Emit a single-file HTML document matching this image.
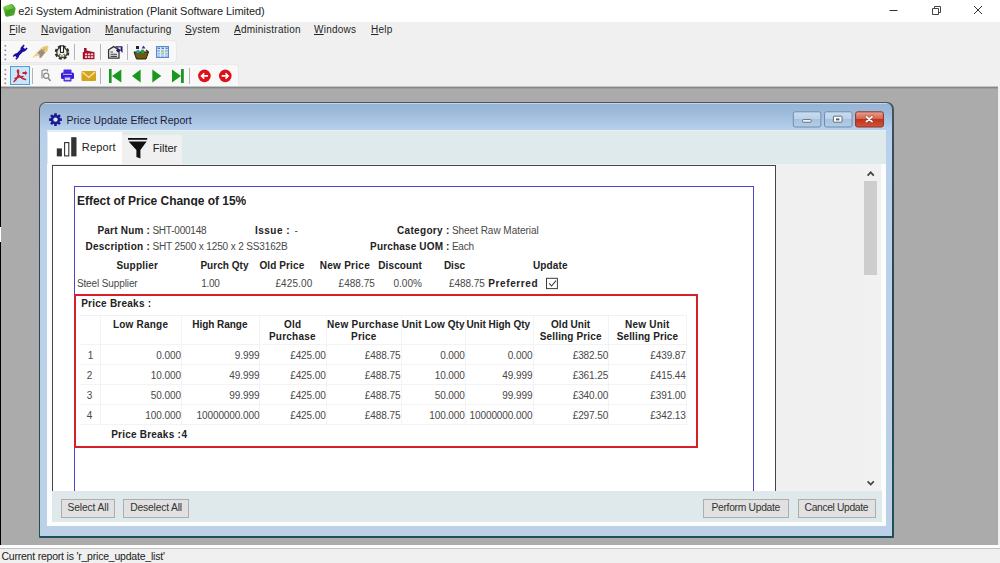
<!DOCTYPE html>
<html><head><meta charset="utf-8">
<style>
*{margin:0;padding:0;box-sizing:border-box}
html,body{width:1000px;height:563px;overflow:hidden;background:#f0f0f0;font-family:"Liberation Sans",sans-serif;}
.a{position:absolute}
.t{position:absolute;white-space:nowrap;line-height:1}
#titlebar{left:0;top:0;width:1000px;height:22px;background:#fff}
#menubar{left:0;top:22px;width:1000px;height:17px;background:#f0f0f0}
#menubar .t{font-size:10px;color:#262626;top:2.900px;letter-spacing:0.25px}
#menubar u{text-decoration:underline}
#mdi{left:0;top:87px;width:998.400px;height:457.600px;background:#ababab}
#status{left:0;top:545px;width:1000px;height:18px;background:#f0f0f0}
.r{font-size:10px}
.n{color:#484848}
.b{font-weight:bold;color:#222}
.btn{position:absolute;border:1px solid #adadad;background:#e1e1e1}
.bt{font-size:10.3px;color:#333;margin-top:0.4px}
</style></head><body>

<!-- title bar -->
<div class="a" id="titlebar">
  <svg class="a" style="left:2px;top:3px" width="15" height="15" viewBox="2 3 15 15"><defs><linearGradient id="gi" x1="0" y1="0" x2="1" y2="1"><stop offset="0" stop-color="#8ad84a"/><stop offset=".5" stop-color="#3c9a22"/><stop offset="1" stop-color="#5cb030"/></linearGradient></defs><path d="M3.200 8.200 Q3 6.800 4.600 6.200 L10.600 4.200 Q12 3.800 13 4.800 L15.200 7.600 Q15.800 8.600 15.400 9.600 L14.400 14.200 Q14 15.400 12.800 15.600 L7.400 16.800 Q6 17 5.400 15.800 Z" fill="url(#gi)"/><path d="M4 7 L10.800 4.600 L14.600 8 L7.600 10 Z" fill="#8fdc52" opacity=".55"/></svg>
  <div class="t" style="left:18.300px;top:5.800px;font-size:11px;color:#222;letter-spacing:-0.06px">e2i System Administration (Planit Software Limited)</div>
  <svg class="a" style="left:880px;top:0" width="120" height="22" viewBox="0 0 120 22"><path d="M9.500 10.500 H17.500" stroke="#333" stroke-width="1" fill="none"/><path d="M52.500 8.500 H58.500 V14.500 H52.500 Z M54.500 8.500 V6.500 H60.500 V12.500 H58.500" stroke="#444" stroke-width="1" fill="none"/><path d="M94 6 L102 14 M102 6 L94 14" stroke="#333" stroke-width="1" fill="none"/></svg>
</div>

<!-- menu bar -->
<div class="a" id="menubar">
  <div class="t" style="left:9.200px"><u>F</u>ile</div>
  <div class="t" style="left:41px"><u>N</u>avigation</div>
  <div class="t" style="left:105px"><u>M</u>anufacturing</div>
  <div class="t" style="left:185px"><u>S</u>ystem</div>
  <div class="t" style="left:234px"><u>A</u>dministration</div>
  <div class="t" style="left:314px"><u>W</u>indows</div>
  <div class="t" style="left:371px"><u>H</u>elp</div>
</div>

<!-- toolbars -->
<div class="a" id="tb1" style="left:0;top:41px;width:176px;height:21px;background:#f8f8f8;border-radius:0 3px 3px 0;box-shadow:0 0 0 1px #e9e9e9"></div>
<div class="a" id="tb2" style="left:0;top:65px;width:238px;height:21px;background:#f8f8f8;border-radius:0 3px 0 0;box-shadow:0 0 0 1px #e9e9e9"></div>
<svg class="a" id="tbicons" style="left:0;top:40px" width="240" height="47" viewBox="0 40 240 47">
<g fill="#8a8a8a"><rect x="4.500" y="45" width="1.600" height="1.600"/><rect x="4.500" y="49.500" width="1.600" height="1.600"/><rect x="4.500" y="54" width="1.600" height="1.600"/><rect x="4.500" y="58.500" width="1.600" height="1.600"/>
<rect x="4.500" y="69" width="1.600" height="1.600"/><rect x="4.500" y="73.500" width="1.600" height="1.600"/><rect x="4.500" y="78" width="1.600" height="1.600"/><rect x="4.500" y="82.500" width="1.600" height="1.600"/></g>
<g stroke="#b4b4b4" stroke-width="1"><path d="M74.500 44 V60 M100.500 44 V60 M127.500 44 V60 M32.500 68 V84 M100.500 68 V84 M189.500 68 V84"/></g>
<!-- wrench -->
<g transform="translate(20 52.400) scale(.86) rotate(-45) translate(-20.2 -52.400)"><rect x="13.500" y="50.500" width="13.400" height="3.800" fill="#1c0ca0"/><path d="M26 49 h3.600 l0 1.800 h-2.600 v3 h2.600 v1.800 h-3.600 a3.300 3.300 0 0 1 0 -6.600 z" fill="#1c0ca0"/><path d="M14.400 49.400 h-3.200 v1.700 h2.300 v2.600 h-2.300 v1.700 h3.200 a3 3 0 0 0 0 -6 z" fill="#1c0ca0"/></g>
<!-- rocket -->
<g transform="translate(40.500 52.300) scale(1.1) translate(-40.500 -52.300)"><path d="M32.800 57.200 L37.500 52 L42 47.500 L46.500 46.200 L47.800 47.200 L47 51 L42.500 56 L40 58 L39 55.500 L36 56.200 Z" fill="#ecd084"/><path d="M37.600 52.600 L41.800 49.200 L44.600 52.400 L41.200 57 L39.600 57.400 L39.800 54.600 Z" fill="#9a8c8c"/><path d="M42.500 48.500 L46.200 46.800 L47 47.800 L46 51.200 Z" fill="#e6c37c"/><circle cx="43.800" cy="50" r="1" fill="#c9a468"/></g>
<!-- gear clock -->
<g transform="translate(62 52.400) scale(1.08) translate(-62 -52.400)"><circle cx="62" cy="52.400" r="5.700" fill="none" stroke="#2e2e2e" stroke-width="2.100" stroke-dasharray="2.700 1.780"/><circle cx="62" cy="52.400" r="4.800" fill="#f1efe2" stroke="#3a3a30" stroke-width="1.100"/><rect x="60.600" y="46.400" width="2.800" height="6" fill="#fff" stroke="#222" stroke-width="1"/><path d="M58.500 56 L60.500 54 M63.500 54 L65.500 56 M62 55 V57.500" stroke="#55553a" stroke-width="1.100"/></g>
<!-- factory -->
<g fill="#a4142a"><path d="M82.800 52 H84 V48 H86.600 V50.400 L94.500 52.200 V59.200 H82.800 Z"/></g>
<g fill="#f6dada"><rect x="85" y="53.500" width="2.200" height="1.700"/><rect x="88" y="53.500" width="2.200" height="1.700"/><rect x="91" y="53.500" width="2.200" height="1.700"/><rect x="85" y="56.200" width="2.200" height="1.700"/><rect x="88" y="56.200" width="2.200" height="1.700"/><rect x="91" y="56.200" width="2.200" height="1.700"/></g>
<!-- form icon -->
<g><path d="M108.600 58.200 V49.800 L113.600 46.600 L119 49.800 V58.200 Z" fill="#ededed" stroke="#333" stroke-width="1.300"/><path d="M110.500 52 H113 M110.500 54.300 H117 M110.500 56.400 H117" stroke="#444" stroke-width="1.100"/><path d="M115 46.200 H122.500 V53 L120.400 50.600 L118 52.600 L116 50.400 L117.600 48.600 Z" fill="#1c1c60"/><path d="M117 47.400 L120.800 47.200 L120.600 50" fill="#dfe4fa"/></g>
<!-- box with shapes -->
<g><path d="M134 52 H148.500 L146 59 H136.500 Z" fill="#6a5a14" stroke="#2a2408" stroke-width="1"/><rect x="136" y="46" width="3" height="3" fill="#222"/><path d="M141.500 48.500 L143.500 45.500 L145.500 48.500 Z" fill="#2a3a9a"/><circle cx="138" cy="51.500" r="1.800" fill="#2aa0c8"/><circle cx="142.500" cy="51.500" r="2" fill="#2a9a3a"/><path d="M146 50 L148.500 52" stroke="#222" stroke-width="1.200"/></g>
<!-- grid -->
<g><rect x="156.500" y="46.500" width="12" height="11" fill="#9cc0ea" stroke="#5a8ad0" stroke-width="1"/><path d="M160.500 47 V57 M164.500 47 V57" stroke="#dfeaf8" stroke-width="1"/><path d="M157 49.500 H168 M157 52.500 H168 M157 55 H168" stroke="#dfeaf8" stroke-width=".8"/><path d="M158 48.500 H160 M162 48.500 H164 M166 48.500 H167.500" stroke="#3a6ab8" stroke-width=".8"/><rect x="161.500" y="50.500" width="2.500" height="4" fill="#b8d08a" opacity=".8"/></g>
<!-- pdf button -->
<rect x="10.500" y="66.500" width="19" height="18" fill="#cde6f7" stroke="#4a9fe0" stroke-width="1"/>
<g fill="none" stroke="#c0283a" stroke-width="1.500" stroke-linecap="round"><path d="M14 81.500 C17 79 19 75 18.500 70.500 C18.200 69.600 17.200 70 17.500 71.500 C18.500 76 21.500 78.500 25.500 79.500"/><path d="M15 78.500 C18 77 21 76.500 23 76.500"/></g>
<path d="M22.500 72 H25 V70.800 L27.500 73 L25 75.200 V74 H22.500 Z" fill="#c0283a"/>
<!-- search -->
<g fill="none" stroke="#8c8c8c" stroke-width="1.200"><path d="M42 78.500 V71 L43.500 69.800 H47.500 V71.500"/><circle cx="46.200" cy="75.800" r="2.600"/><path d="M48 77.800 L50.500 81" stroke-width="1.600"/></g>
<!-- printer -->
<g><rect x="63.500" y="69.500" width="8" height="3.500" rx=".8" fill="#4a2ae0"/><rect x="61" y="72.500" width="13" height="6.500" rx="1.500" fill="#3a1ad6"/><rect x="63.500" y="76.500" width="8" height="5" rx=".8" fill="#4a2ae0"/><rect x="64.800" y="77.500" width="5.400" height="2.600" fill="#cfc8f4"/><rect x="63" y="73.800" width="9" height="1.200" fill="#d8d0ff" opacity=".8"/></g>
<!-- mail -->
<g><rect x="81.500" y="71" width="14.500" height="10" rx="1" fill="#d6a41c"/><path d="M82.500 72 L88.800 77.500 L95 72" fill="none" stroke="#f6e6b0" stroke-width="1.300"/></g>
<!-- nav green -->
<g fill="#18981e"><rect x="109" y="69" width="2.600" height="14"/><path d="M121.300 69.500 V82.500 L112 76 Z"/>
<path d="M140.600 69.500 V82.500 L132 76 Z"/>
<path d="M152.300 69.500 V82.500 L161.300 76 Z"/>
<path d="M172 69.500 V82.500 L181 76 Z"/><rect x="181" y="69" width="2.800" height="14"/></g>
<!-- red circles -->
<g><circle cx="204.400" cy="75.900" r="6.300" fill="#e01018"/><path d="M208 75.900 H202 M204.200 73.200 L201.500 75.900 L204.200 78.600" stroke="#fff" stroke-width="1.600" fill="none"/>
<circle cx="225.300" cy="75.900" r="6.300" fill="#e01018"/><path d="M221.700 75.900 H227.700 M225.500 73.200 L228.200 75.900 L225.500 78.600" stroke="#fff" stroke-width="1.600" fill="none"/></g>

</svg>
<!-- MDI -->
<div class="a" id="mdi"></div>
<div class="a" style="left:0;top:86px;width:998.400px;height:1px;background:#c4c4c4"></div><div class="a" style="left:0;top:87px;width:998.400px;height:1px;background:#868686"></div><div class="a" style="left:0;top:88px;width:998.400px;height:1px;background:#9c9c9c"></div>
<div class="a" style="left:0;top:0;width:1.200px;height:548px;background:#000"></div><div class="a" style="left:0;top:227px;width:1.200px;height:15px;background:#fff"></div>

<!-- child window -->
<div class="a" id="win" style="left:39px;top:102px;width:855px;height:436px;border-radius:7px 7px 1px 1px;background:linear-gradient(#4a5560,#3a4a58 40px,#2a4652 200px,#1d5058)"></div>
<div class="a" id="winin" style="left:40px;top:103px;width:852px;height:433px;border-radius:6px 6px 0 0;background:linear-gradient(#c6d6e8,#c6d6e8 1px,#98b5d5 1.500px,#9bb8d8 7px,#a4c0de 14px,#aec9e6 21px,#b6d0ec 26px,#bbd1e9 60px,#bcd1e8)"></div>
<div class="a" id="client" style="left:47px;top:130px;width:839px;height:396px;background:#fbfdfd"></div>
<div class="a" id="tabstrip" style="left:47px;top:130px;width:839px;height:34px;background:#deeaec;border-top:1px solid #e6f0f2"></div>

<!-- window title -->
<svg class="a" style="left:48px;top:112px" width="16" height="16" viewBox="48 112 16 16"><g fill="#1c1c90"><circle cx="55.500" cy="119.600" r="4.700"/><g stroke="#1c1c90" stroke-width="2.600"><path d="M55.500 113.200 V126 M49.100 119.600 H61.900 M51 115.100 L60 124.100 M60 115.100 L51 124.100"/></g></g><circle cx="55.500" cy="119.600" r="2.200" fill="#d8e6f6"/></svg>
<div class="t" style="left:66.500px;top:114.700px;font-size:10.500px;color:#1c1c3c;letter-spacing:0.02px">Price Update Effect Report</div>

<!-- window buttons -->
<svg class="a" style="left:790px;top:109px" width="98" height="22" viewBox="790 109 98 22">
<defs>
<linearGradient id="gb" x1="0" y1="0" x2="0" y2="1"><stop offset="0" stop-color="#c9dcf0"/><stop offset=".48" stop-color="#bcd2ea"/><stop offset=".5" stop-color="#a6c2e0"/><stop offset="1" stop-color="#b4cde8"/></linearGradient>
<linearGradient id="gr" x1="0" y1="0" x2="0" y2="1"><stop offset="0" stop-color="#e8a090"/><stop offset=".48" stop-color="#d8604a"/><stop offset=".5" stop-color="#c4321a"/><stop offset="1" stop-color="#d2553a"/></linearGradient>
</defs>
<rect x="793.300" y="111.800" width="27.600" height="15.200" rx="2" fill="url(#gb)" stroke="#6f8cae" stroke-width="1"/>
<rect x="824.500" y="111.800" width="27.600" height="15.200" rx="2" fill="url(#gb)" stroke="#6f8cae" stroke-width="1"/>
<rect x="855.600" y="111.800" width="27.800" height="15.200" rx="2" fill="url(#gr)" stroke="#8a3428" stroke-width="1"/>
<rect x="802.600" y="119.600" width="8.600" height="2.600" rx=".8" fill="#fff" stroke="#55606c" stroke-width=".9"/>
<rect x="833.400" y="116.200" width="8.600" height="6" rx=".6" fill="#fff" stroke="#55606c" stroke-width=".9"/>
<rect x="836" y="118.400" width="3.400" height="2" fill="#55606c"/>
<path d="M866.400 116.800 L872 121.600 M872 116.800 L866.400 121.600" stroke="#8a3a30" stroke-width="3" stroke-linecap="round"/>
<path d="M866.400 116.800 L872 121.600 M872 116.800 L866.400 121.600" stroke="#fff" stroke-width="1.900" stroke-linecap="round"/>
</svg>

<!-- tabs -->
<div class="a" style="left:47.500px;top:132px;width:74.500px;height:33px;background:#fff"></div>
<div class="a" style="left:122px;top:134.500px;width:60px;height:30px;background:#f0f0f0"></div>
<svg class="a" style="left:54px;top:134px" width="100" height="28" viewBox="54 134 100 28">
<rect x="56.800" y="148.400" width="5.100" height="8" fill="#333"/>
<rect x="64.600" y="142.600" width="4.200" height="13.300" fill="#fff" stroke="#333" stroke-width="1.100"/>
<rect x="71.200" y="137.200" width="5.300" height="19.200" fill="#333"/>
<rect x="128" y="138" width="19.200" height="1.800" fill="#111"/>
<path d="M128.600 141.500 H146.600 L140.400 150 V158.600 L136.400 157 V150 Z" fill="#111"/>
</svg>
<div class="t" style="left:81.800px;top:141.700px;font-size:11px;color:#222;letter-spacing:0.15px">Report</div>
<div class="t" style="left:152.800px;top:143.100px;font-size:11px;color:#222">Filter</div>

<!-- tab page -->
<div class="a" style="left:52px;top:164px;width:828.500px;height:328px;background:#f0f0f0"></div>
<div class="a" style="left:52px;top:491px;width:830px;height:31px;background:#dfe9ec"></div>
<!-- report viewer -->
<div class="a" id="viewer" style="left:52px;top:165px;width:724px;height:326px;background:#fff;border:1px solid #454545;border-bottom:none"></div>
<div class="a" id="bluebox" style="left:74px;top:186px;width:680px;height:305px;border:1px solid #4a46c4;border-bottom:none"></div>
<!-- scrollbar -->
<div class="a" style="left:862.500px;top:165px;width:17px;height:326px;background:#f1f1f1"></div>
<div class="a" style="left:864px;top:181px;width:13.400px;height:93.500px;background:#cdcdcd"></div>
<svg class="a" style="left:862px;top:165px" width="18" height="326" viewBox="862 165 18 326"><path d="M867.600 175.600 L870.700 172.300 L873.800 175.600" fill="none" stroke="#444" stroke-width="1.700"/><path d="M867.600 481.300 L870.700 484.600 L873.800 481.300" fill="none" stroke="#444" stroke-width="1.700"/></svg>

<!-- report text -->
<div class="t b" style="left:77px;top:195.400px;font-size:12px;height:10.400px;overflow:hidden;letter-spacing:-0.03px">Effect of Price Change of 15%</div>

<!-- grid -->
<div class="a" id="grid" style="left:79px;top:315px;width:608px;height:110px;
background:
linear-gradient(#f0f0f0,#f3f3f3) 0 0/100% 1px no-repeat,
linear-gradient(#f3f3f3,#f3f3f3) 0 29px/100% 1px no-repeat,
linear-gradient(#f3f3f3,#f3f3f3) 0 49px/100% 1px no-repeat,
linear-gradient(#f3f3f3,#f3f3f3) 0 69px/100% 1px no-repeat,
linear-gradient(#f3f3f3,#f3f3f3) 0 89px/100% 1px no-repeat,
linear-gradient(#f3f3f3,#f3f3f3) 0 109px/100% 1px no-repeat,
linear-gradient(#f3f3f3,#f3f3f3) 21px 0/1px 100% no-repeat,
linear-gradient(#f3f3f3,#f3f3f3) 102px 0/1px 100% no-repeat,
linear-gradient(#f3f3f3,#f3f3f3) 180px 0/1px 100% no-repeat,
linear-gradient(#f3f3f3,#f3f3f3) 247px 0/1px 100% no-repeat,
linear-gradient(#f3f3f3,#f3f3f3) 322px 0/1px 100% no-repeat,
linear-gradient(#f3f3f3,#f3f3f3) 386px 0/1px 100% no-repeat,
linear-gradient(#f3f3f3,#f3f3f3) 454px 0/1px 100% no-repeat,
linear-gradient(#f3f3f3,#f3f3f3) 529px 0/1px 100% no-repeat,
linear-gradient(#f3f3f3,#f3f3f3) 607px 0/1px 100% no-repeat"></div>
<div class="t r b" style="left:97.40px;top:225.69px;letter-spacing:0.214px">Part Num :</div>
<div class="t r n" style="left:152.40px;top:225.69px;letter-spacing:-0.221px">SHT-000148</div>
<div class="t r b" style="left:254.90px;top:225.69px;letter-spacing:0.502px">Issue :</div>
<div class="t r n" style="left:294.40px;top:225.69px;letter-spacing:0.000px">-</div>
<div class="t r b" style="left:397.10px;top:225.69px;letter-spacing:0.305px">Category :</div>
<div class="t r n" style="left:451.90px;top:225.69px;letter-spacing:-0.026px">Sheet Raw Material</div>
<div class="t r b" style="left:85.40px;top:241.69px;letter-spacing:0.275px">Description :</div>
<div class="t r n" style="left:152.40px;top:241.69px;letter-spacing:-0.134px">SHT 2500 x 1250 x 2 SS3162B</div>
<div class="t r b" style="left:370.10px;top:241.69px;letter-spacing:0.161px">Purchase UOM :</div>
<div class="t r n" style="left:451.90px;top:241.69px;letter-spacing:-0.199px">Each</div>
<div class="t r b" style="left:116.40px;top:260.69px;letter-spacing:0.211px">Supplier</div>
<div class="t r b" style="left:200.40px;top:260.69px;letter-spacing:0.045px">Purch Qty</div>
<div class="t r b" style="left:259.40px;top:260.69px;letter-spacing:0.116px">Old Price</div>
<div class="t r b" style="left:319.70px;top:260.69px;letter-spacing:0.276px">New Price</div>
<div class="t r b" style="left:378.20px;top:260.69px;letter-spacing:0.140px">Discount</div>
<div class="t r b" style="left:443.90px;top:260.69px;letter-spacing:-0.006px">Disc</div>
<div class="t r b" style="left:532.90px;top:260.69px;letter-spacing:0.132px">Update</div>
<div class="t r n" style="left:76.90px;top:278.99px;letter-spacing:-0.112px">Steel Supplier</div>
<div class="t r n" style="left:201.15px;top:278.99px;letter-spacing:-0.255px">1.00</div>
<div class="t r n" style="left:275.40px;top:278.99px;letter-spacing:0.113px">£425.00</div>
<div class="t r n" style="left:338.60px;top:278.99px;letter-spacing:0.021px">£488.75</div>
<div class="t r n" style="left:393.60px;top:278.99px;letter-spacing:-0.032px">0.00%</div>
<div class="t r n" style="left:449.00px;top:278.99px;letter-spacing:-0.065px">£488.75</div>
<div class="t r b" style="left:488.30px;top:278.99px;letter-spacing:0.603px">Preferred</div>
<div class="t r b" style="left:81.20px;top:298.54px;letter-spacing:0.242px">Price Breaks :</div>
<div class="t r b" style="left:112.90px;top:319.64px;letter-spacing:0.217px">Low Range</div>
<div class="t r b" style="left:192.20px;top:319.64px;letter-spacing:-0.026px">High Range</div>
<div class="t r b" style="left:284.00px;top:319.64px;letter-spacing:0.209px">Old</div>
<div class="t r b" style="left:268.90px;top:331.74px;letter-spacing:0.246px">Purchase</div>
<div class="t r b" style="left:327.00px;top:319.64px;letter-spacing:0.302px">New Purchase</div>
<div class="t r b" style="left:351.00px;top:331.74px;letter-spacing:0.226px">Price</div>
<div class="t r b" style="left:401.80px;top:319.64px;letter-spacing:0.094px">Unit Low Qty</div>
<div class="t r b" style="left:466.40px;top:319.64px;letter-spacing:-0.022px">Unit High Qty</div>
<div class="t r b" style="left:551.00px;top:319.64px;letter-spacing:0.039px">Old Unit</div>
<div class="t r b" style="left:539.80px;top:331.74px;letter-spacing:0.136px">Selling Price</div>
<div class="t r b" style="left:625.00px;top:319.64px;letter-spacing:0.227px">New Unit</div>
<div class="t r b" style="left:616.80px;top:331.74px;letter-spacing:0.105px">Selling Price</div>
<div class="t r b" style="left:111.15px;top:430.14px;letter-spacing:0.224px">Price Breaks :</div>
<div class="t r b" style="left:181.60px;top:430.14px;letter-spacing:0.000px">4</div>
<div class="t r n" style="left:87.70px;top:351.24px;letter-spacing:0.000px">1</div>
<div class="t r n" style="left:86.70px;top:371.04px;letter-spacing:0.000px">2</div>
<div class="t r n" style="left:86.70px;top:390.94px;letter-spacing:0.000px">3</div>
<div class="t r n" style="left:86.70px;top:410.84px;letter-spacing:0.000px">4</div>
<div class="t r n" style="left:156.31px;top:351.24px;letter-spacing:-0.09px">0.000</div>
<div class="t r n" style="left:234.81px;top:351.24px;letter-spacing:-0.09px">9.999</div>
<div class="t r n" style="left:290.16px;top:351.24px;letter-spacing:-0.09px">£425.00</div>
<div class="t r n" style="left:364.86px;top:351.24px;letter-spacing:-0.09px">£488.75</div>
<div class="t r n" style="left:440.21px;top:351.24px;letter-spacing:-0.09px">0.000</div>
<div class="t r n" style="left:507.81px;top:351.24px;letter-spacing:-0.09px">0.000</div>
<div class="t r n" style="left:572.66px;top:351.24px;letter-spacing:-0.09px">£382.50</div>
<div class="t r n" style="left:650.26px;top:351.24px;letter-spacing:-0.09px">£439.87</div>
<div class="t r n" style="left:150.84px;top:371.04px;letter-spacing:-0.09px">10.000</div>
<div class="t r n" style="left:229.34px;top:371.04px;letter-spacing:-0.09px">49.999</div>
<div class="t r n" style="left:290.16px;top:371.04px;letter-spacing:-0.09px">£425.00</div>
<div class="t r n" style="left:364.86px;top:371.04px;letter-spacing:-0.09px">£488.75</div>
<div class="t r n" style="left:434.74px;top:371.04px;letter-spacing:-0.09px">10.000</div>
<div class="t r n" style="left:502.34px;top:371.04px;letter-spacing:-0.09px">49.999</div>
<div class="t r n" style="left:572.66px;top:371.04px;letter-spacing:-0.09px">£361.25</div>
<div class="t r n" style="left:650.26px;top:371.04px;letter-spacing:-0.09px">£415.44</div>
<div class="t r n" style="left:150.84px;top:390.94px;letter-spacing:-0.09px">50.000</div>
<div class="t r n" style="left:229.34px;top:390.94px;letter-spacing:-0.09px">99.999</div>
<div class="t r n" style="left:290.16px;top:390.94px;letter-spacing:-0.09px">£425.00</div>
<div class="t r n" style="left:364.86px;top:390.94px;letter-spacing:-0.09px">£488.75</div>
<div class="t r n" style="left:434.74px;top:390.94px;letter-spacing:-0.09px">50.000</div>
<div class="t r n" style="left:502.34px;top:390.94px;letter-spacing:-0.09px">99.999</div>
<div class="t r n" style="left:572.66px;top:390.94px;letter-spacing:-0.09px">£340.00</div>
<div class="t r n" style="left:650.26px;top:390.94px;letter-spacing:-0.09px">£391.00</div>
<div class="t r n" style="left:145.36px;top:410.84px;letter-spacing:-0.09px">100.000</div>
<div class="t r n" style="left:196.50px;top:410.84px;letter-spacing:-0.09px">10000000.000</div>
<div class="t r n" style="left:290.16px;top:410.84px;letter-spacing:-0.09px">£425.00</div>
<div class="t r n" style="left:364.86px;top:410.84px;letter-spacing:-0.09px">£488.75</div>
<div class="t r n" style="left:429.26px;top:410.84px;letter-spacing:-0.09px">100.000</div>
<div class="t r n" style="left:469.50px;top:410.84px;letter-spacing:-0.09px">10000000.000</div>
<div class="t r n" style="left:572.66px;top:410.84px;letter-spacing:-0.09px">£297.50</div>
<div class="t r n" style="left:650.26px;top:410.84px;letter-spacing:-0.09px">£342.13</div>
<!-- red box -->
<div class="a" id="red" style="left:73.5px;top:294px;width:624.2px;height:154px;border:2.4px solid #d3202a"></div>

<svg class="a" style="left:545px;top:277px" width="15" height="14" viewBox="545 277 15 14"><rect x="546.500" y="278.300" width="10.900" height="10.300" fill="#fff" stroke="#3c3c3c" stroke-width="1"/><path d="M549.200 283.400 L551.600 286 L556 280.600" fill="none" stroke="#3c3c3c" stroke-width="1.100"/></svg>
<!-- bottom buttons -->
<div class="btn" style="left:61.300px;top:498.800px;width:53.500px;height:18.800px"></div>
<div class="btn" style="left:123.300px;top:498.800px;width:66.200px;height:18.800px"></div>
<div class="btn" style="left:703.300px;top:498.800px;width:85.500px;height:18.800px"></div>
<div class="btn" style="left:797.600px;top:498.800px;width:78.400px;height:18.800px"></div>
<div class="t bt" style="left:67.400px;top:503px;letter-spacing:-0.12px">Select All</div>
<div class="t bt" style="left:130.300px;top:503px;letter-spacing:-0.18px">Deselect All</div>
<div class="t bt" style="left:711.500px;top:503px;letter-spacing:-0.3px">Perform Update</div>
<div class="t bt" style="left:804.600px;top:503px;letter-spacing:-0.36px">Cancel Update</div>

<!-- status -->
<div class="a" style="left:0;top:544.600px;width:1000px;height:3.600px;background:#fcfcfc"></div>
<div class="a" style="left:0;top:548.200px;width:1000px;height:1.300px;background:#c2c2c2"></div>
<div class="t" style="left:1.400px;top:550.700px;font-size:10.500px;color:#222;letter-spacing:-0.21px">Current report is 'r_price_update_list'</div>

</body></html>
